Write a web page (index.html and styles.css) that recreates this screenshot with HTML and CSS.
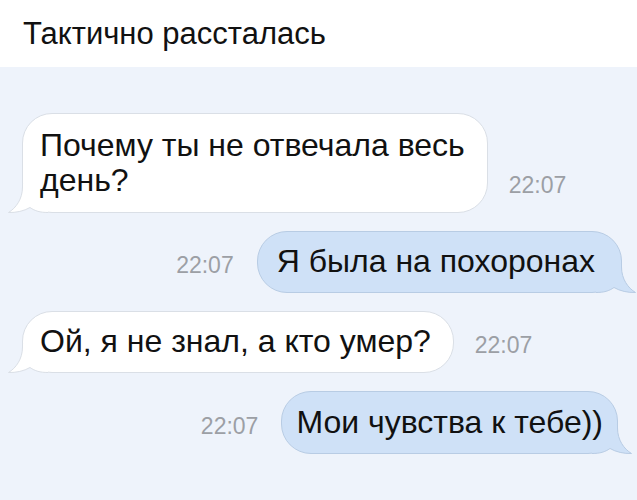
FILE: index.html
```html
<!DOCTYPE html>
<html lang="ru">
<head>
<meta charset="utf-8">
<link rel="stylesheet" href="styles.css">
</head>
<body>
<header class="header">
  <h1 class="title">Тактично рассталась</h1>
</header>
<main class="chat">
  <div class="row row-in">
    <div class="bubble bubble-in bubble-two">
      <svg class="tail" viewBox="0 0 40 30" width="40" height="30"><path class="tail-fill" d="M14.5 0 L14.5 3 C14.5 15 8 24 0.5 28.5 C8 28.8 16 27 22 23.5 C27 27 32 28.5 40 28.5 L40 0 Z"/><path class="tail-line" d="M14.5 0 L14.5 3 C14.5 15 8 24 0.5 28.5 C8 28.8 16 27 22 23.5 C27 27 32 28.5 40 28.5"/></svg>
      <p class="text">Почему ты не отвечала весь<br>день?</p>
    </div>
    <span class="time">22:07</span>
  </div>
  <div class="row row-out">
    <span class="time">22:07</span>
    <div class="bubble bubble-out">
      <svg class="tail" viewBox="0 0 40 30" width="40" height="30"><path class="tail-fill" d="M14.5 0 L14.5 3 C14.5 15 8 24 0.5 28.5 C8 28.8 16 27 22 23.5 C27 27 32 28.5 40 28.5 L40 0 Z"/><path class="tail-line" d="M14.5 0 L14.5 3 C14.5 15 8 24 0.5 28.5 C8 28.8 16 27 22 23.5 C27 27 32 28.5 40 28.5"/></svg>
      <p class="text">Я была на похоронах</p>
    </div>
  </div>
  <div class="row row-in">
    <div class="bubble bubble-in">
      <svg class="tail" viewBox="0 0 40 30" width="40" height="30"><path class="tail-fill" d="M14.5 0 L14.5 3 C14.5 15 8 24 0.5 28.5 C8 28.8 16 27 22 23.5 C27 27 32 28.5 40 28.5 L40 0 Z"/><path class="tail-line" d="M14.5 0 L14.5 3 C14.5 15 8 24 0.5 28.5 C8 28.8 16 27 22 23.5 C27 27 32 28.5 40 28.5"/></svg>
      <p class="text">Ой, я не знал, а кто умер?</p>
    </div>
    <span class="time">22:07</span>
  </div>
  <div class="row row-out">
    <span class="time">22:07</span>
    <div class="bubble bubble-out bubble-tight">
      <svg class="tail" viewBox="0 0 40 30" width="40" height="30"><path class="tail-fill" d="M14.5 0 L14.5 3 C14.5 15 8 24 0.5 28.5 C8 28.8 16 27 22 23.5 C27 27 32 28.5 40 28.5 L40 0 Z"/><path class="tail-line" d="M14.5 0 L14.5 3 C14.5 15 8 24 0.5 28.5 C8 28.8 16 27 22 23.5 C27 27 32 28.5 40 28.5"/></svg>
      <p class="text">Мои чувства к тебе))</p>
    </div>
  </div>
</main>
</body>
</html>
```

FILE: styles.css
```css
* { box-sizing: border-box; }
html, body { margin: 0; padding: 0; }
body {
  width: 637px;
  height: 500px;
  overflow: hidden;
  font-family: "Liberation Sans", Arial, sans-serif;
  background: #eef3fb;
  color: #111;
}
.header {
  height: 67px;
  background: #ffffff;
  padding: 16px 0 0 23px;
}
.title {
  margin: 0;
  font-weight: 400;
  font-size: 31px;
  line-height: 36px;
  color: #111;
}
.chat {
  display: flex;
  flex-direction: column;
  gap: 18px;
  padding: 46px 15px 0 22px;
}
.row {
  display: flex;
  align-items: flex-end;
  gap: 21px;
}
.row-out {
  justify-content: flex-end;
  gap: 23px;
}
.bubble {
  position: relative;
  border-radius: 30px;
  padding: 12px 22px 13px 17px;
  border: 1px solid #dadfe6;
}
.bubble-two { padding-top: 14px; padding-bottom: 14px; }
.bubble-in { background: #ffffff; }
.bubble-out {
  background: #cfe1f7;
  border-color: #b8cce4;
  padding: 12px 26px 13px 19px;
}
.bubble-tight {
  padding: 13px 14px 13px 14px;
  margin-right: 4px;
}
.text {
  position: relative;
  z-index: 1;
  margin: 0;
  font-size: 32px;
  line-height: 35px;
  color: #111;
  white-space: nowrap;
}
.time {
  font-size: 23px;
  line-height: 26px;
  color: #9c9fa5;
  padding-bottom: 15px;
}
.tail {
  position: absolute;
  z-index: 0;
  bottom: -2px;
  left: -15px;
  overflow: visible;
}
.bubble-out .tail {
  left: auto;
  right: -15px;
  transform: scaleX(-1);
}
.tail-fill { fill: #ffffff; }
.tail-line { fill: none; stroke: #dadfe6; stroke-width: 1; }
.bubble-out .tail-fill { fill: #cfe1f7; }
.bubble-out .tail-line { stroke: #b8cce4; }
```
